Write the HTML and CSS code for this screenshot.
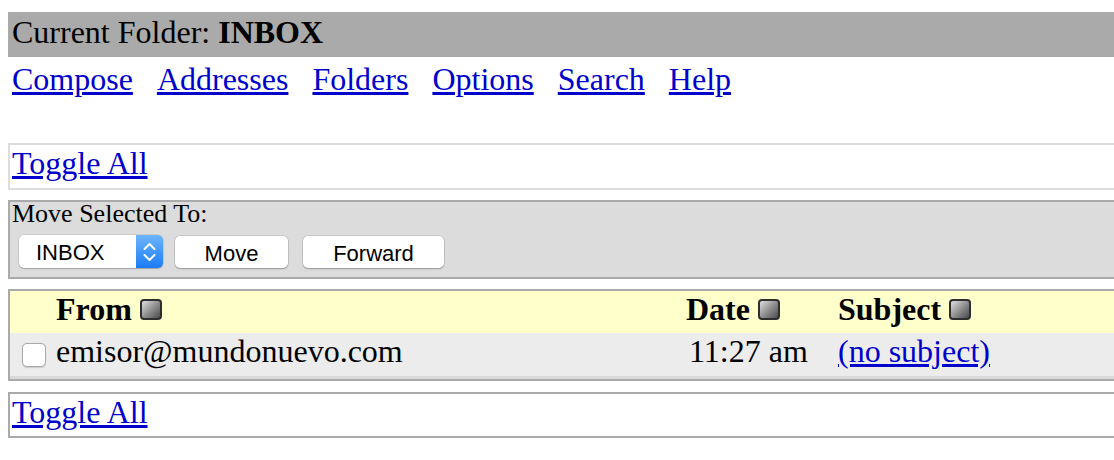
FILE: index.html
```html
<!DOCTYPE html>
<html>
<head>
<meta charset="utf-8">
<title>INBOX</title>
<link rel="stylesheet" href="styles.css">
</head>
<body>
<div class="page">
  <div class="folder-bar">Current Folder: <b>INBOX</b></div>
  <div class="nav">
    <a href="#">Compose</a>
    <a href="#">Addresses</a>
    <a href="#">Folders</a>
    <a href="#">Options</a>
    <a href="#">Search</a>
    <a href="#">Help</a>
  </div>

  <div class="toggle toggle-light"><a href="#">Toggle All</a></div>

  <div class="move-box">
    <div class="move-label">Move Selected To:</div>
    <div class="controls">
      <div class="select">
        <span class="select-text">INBOX</span>
        <span class="stepper">
          <svg width="27" height="33" viewBox="0 0 27 33">
            <polyline points="8.5,14 13.5,9 18.5,14" fill="none" stroke="#fff" stroke-width="2" stroke-linecap="round" stroke-linejoin="round"/>
            <polyline points="8.5,20 13.5,25 18.5,20" fill="none" stroke="#fff" stroke-width="2" stroke-linecap="round" stroke-linejoin="round"/>
          </svg>
        </span>
      </div>
      <button class="btn btn-move">Move</button>
      <button class="btn btn-forward">Forward</button>
    </div>
  </div>

  <table class="msg-table">
    <colgroup>
      <col class="c-check">
      <col class="c-from">
      <col class="c-date">
      <col class="c-subject">
    </colgroup>
    <thead>
      <tr class="head-row">
        <th></th>
        <th>From <span class="sort"></span></th>
        <th>Date <span class="sort"></span></th>
        <th>Subject <span class="sort"></span></th>
      </tr>
    </thead>
    <tbody>
      <tr class="msg-row">
        <td><input type="checkbox" class="check"></td>
        <td>emisor@mundonuevo.com</td>
        <td class="date-cell">11:27 am</td>
        <td><a href="#">(no subject)</a></td>
      </tr>
      <tr class="strip-row">
        <td colspan="4"></td>
      </tr>
    </tbody>
  </table>

  <div class="toggle toggle-dark"><a href="#">Toggle All</a></div>
</div>
</body>
</html>
```

FILE: styles.css
```css
html, body {
  margin: 0;
  padding: 0;
  overflow: hidden;
  background: #ffffff;
}

body {
  font-family: "Liberation Serif", "Times New Roman", serif;
  font-size: 32px;
  color: #000;
}

.page {
  width: 1150px;
  padding: 12px 0 0 8px;
}

a {
  color: #0000cc;
}

.folder-bar {
  background: #aaaaaa;
  height: 45px;
  box-sizing: border-box;
  padding: 2px 0 0 4px;
  line-height: 36px;
}

.nav {
  display: flex;
  gap: 24px;
  margin-top: 4px;
  padding-left: 4px;
  line-height: 36px;
}

.toggle {
  border: 2px solid #aaaaaa;
  padding-left: 2px;
  line-height: 36px;
}

.toggle-light {
  margin-top: 46px;
  height: 43px;
  border-color: #dddddd;
}

.toggle-dark {
  margin-top: 11px;
  height: 42px;
}

.move-box {
  margin-top: 10px;
  border: 2px solid #aaaaaa;
  background: #dcdcdc;
  height: 75px;
}

.move-label {
  font-size: 26px;
  line-height: 23px;
  padding-left: 2px;
}

.controls {
  display: flex;
  align-items: center;
  margin: 10px 0 0 9px;
  height: 33px;
}

.select {
  display: flex;
  width: 144px;
  height: 33px;
  box-sizing: border-box;
  background: #fff;
  border-radius: 5px;
  box-shadow: 0 0 0 0.5px rgba(0,0,0,0.15), 0 1px 1px rgba(0,0,0,0.2);
  overflow: hidden;
  font-family: "Liberation Sans", Arial, sans-serif;
  font-size: 22px;
}

.select-text {
  flex: 1;
  padding: 2px 0 0 17px;
  line-height: 31px;
}

.stepper {
  display: block;
  width: 27px;
  height: 33px;
  background: linear-gradient(#6db5fb, #1a7cf5);
}

.stepper svg {
  display: block;
}

.btn {
  height: 32px;
  box-sizing: border-box;
  border: none;
  border-radius: 5px;
  background: #fff;
  box-shadow: 0 0 0 0.5px rgba(0,0,0,0.18), 0 1px 1.5px rgba(0,0,0,0.25);
  font-family: "Liberation Sans", Arial, sans-serif;
  font-size: 22px;
  color: #000;
  padding: 3px 0 0 0;
  margin-top: 1px;
}

.btn-move {
  width: 113px;
  margin-left: 12px;
}

.btn-forward {
  width: 141px;
  margin-left: 15px;
}

.msg-table {
  margin-top: 10px;
  border: 2px solid #aaaaaa;
  border-spacing: 0;
  width: 100%;
  table-layout: fixed;
}

.c-check { width: 42px; }
.c-from { width: 630px; }
.c-date { width: 152px; }

.msg-table th,
.msg-table td {
  padding: 0 0 0 4px;
  vertical-align: top;
  text-align: left;
  line-height: 36px;
  white-space: nowrap;
}

.msg-table td.date-cell {
  padding-left: 7px;
}

.head-row th {
  height: 42px;
  background: #ffffcc;
  font-weight: bold;
}

.msg-row td {
  height: 43px;
  background: #ececec;
}

.strip-row td {
  height: 3px;
  padding: 0;
  line-height: 0;
  background: #d9d9d9;
}

.sort {
  display: inline-block;
  width: 22px;
  height: 21px;
  box-sizing: border-box;
  border: 2px solid #2e2e2e;
  border-radius: 4px;
  background: linear-gradient(135deg, #e0e0e0, #8a8a8a 55%, #4a4a4a);
}

.check {
  -webkit-appearance: none;
  appearance: none;
  display: block;
  width: 24px;
  height: 24px;
  margin: 10px 0 0 8px;
  box-sizing: border-box;
  border: 1px solid #a9a9a9;
  border-radius: 5px;
  background: #ffffff;
  box-shadow: 0 0.5px 1px rgba(0,0,0,0.15);
}
```
